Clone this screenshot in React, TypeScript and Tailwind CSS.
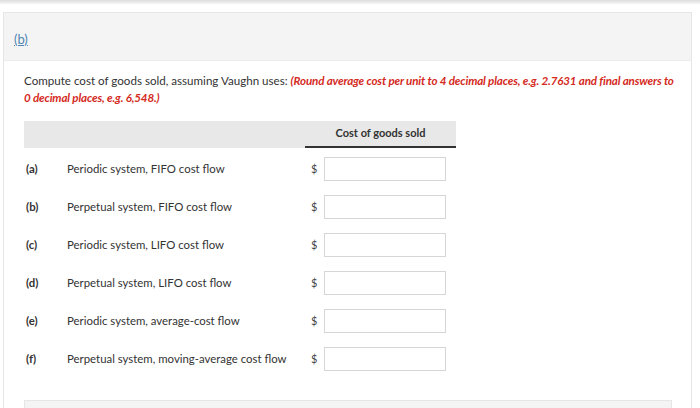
const rows = [
  ["(a)", "Periodic system, FIFO cost flow"],
  ["(b)", "Perpetual system, FIFO cost flow"],
  ["(c)", "Periodic system, LIFO cost flow"],
  ["(d)", "Perpetual system, LIFO cost flow"],
  ["(e)", "Periodic system, average-cost flow"],
  ["(f)", "Perpetual system, moving-average cost flow"],
];

export default function App() {
  return (
    <div className="w-[700px] h-[408px] overflow-hidden bg-white font-['Lato','Liberation_Sans',sans-serif] text-[#333]">
      <div className="h-[4px] bg-gradient-to-b from-[#dcdcdc] to-[#f7f7f7]" />
      <div className="ml-[3px] mt-[8px] w-[689px] border border-[#e6e6e6] bg-white">
        <div className="h-[48px] bg-[#f4f4f4] border-b border-[#ececec] pl-[10px] pt-[13px]">
          <span className="text-[13px] leading-[16px] text-[#4f85b5] underline">(b)</span>
        </div>
        <div className="pl-[20px] pr-[10px] pt-[11px]">
          <p className="text-[11.6px] leading-[17px]">
            Compute cost of goods sold, assuming Vaughn uses:{" "}
            <em className="font-bold text-[#d42a22] tracking-[-0.15px]">
              (Round average cost per unit to 4 decimal places, e.g. 2.7631 and final answers to 0 decimal places, e.g. 6,548.)
            </em>
          </p>

          <div className="mt-[15px] w-[432px]">
            <div className="flex h-[27px] bg-[#e8e8e8]">
              <div className="w-[281px]" />
              <div className="flex-1 flex items-center justify-center border-b-2 border-[#333] text-[11px] font-bold">
                Cost of goods sold
              </div>
            </div>
            <div className="pt-[2px]">
              {rows.map(([k, label]) => (
                <div key={k} className="flex items-center h-[38px] text-[11.4px]">
                  <div className="w-[43px] pl-[2px] font-bold">{k}</div>
                  <div className="w-[238px]">{label}</div>
                  <div className="flex items-center pl-[6px]">
                    <span className="w-[13px] text-[11px] text-[#444]">$</span>
                    <div className="w-[122px] h-[24px] border border-[#d6d6d6] bg-white" />
                  </div>
                </div>
              ))}
            </div>
          </div>

          <div className="mt-[22px] h-[30px] w-[648px] border border-[#e6e6e6] bg-[#f4f4f4]" />
        </div>
      </div>
    </div>
  );
}
